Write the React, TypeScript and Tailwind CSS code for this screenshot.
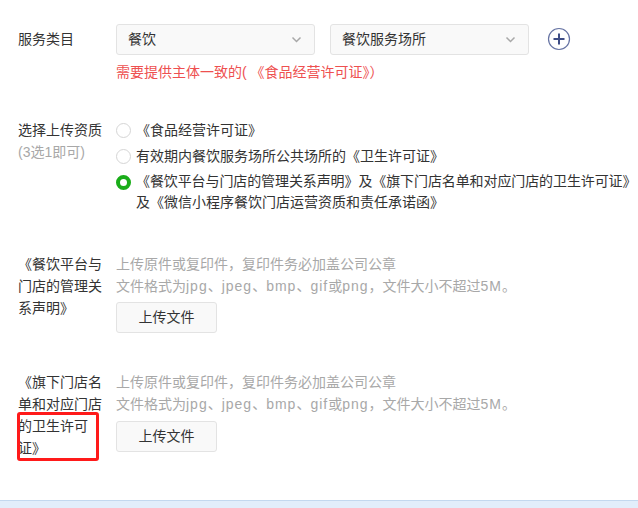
import React from 'react';

const font = { fontFamily: '"Liberation Sans", "Noto Sans CJK SC", sans-serif' };

function Chevron() {
  return (
    <svg width="11" height="7" viewBox="0 0 11 7" className="shrink-0">
      <path d="M1.5 1.5 L5.5 5.5 L9.5 1.5" fill="none" stroke="#a8a8a8" strokeWidth="1.5" />
    </svg>
  );
}

function Select({ value }: { value: string }) {
  return (
    <div className="w-[199px] h-[31px] flex items-center justify-between pl-[11px] pr-[12px] bg-[#f9f9f9] border border-[#e3e3e3] rounded-[3px] text-[14px] text-[#333]">
      <span>{value}</span>
      <Chevron />
    </div>
  );
}

function Radio({ checked }: { checked?: boolean }) {
  if (checked) {
    return <span className="w-[15px] h-[15px] rounded-full border-[4px] border-[#1aad19] bg-white shrink-0" />;
  }
  return <span className="w-[15px] h-[15px] rounded-full border border-[#d5d5d5] bg-white shrink-0" />;
}

function UploadButton() {
  return (
    <button className="w-[101px] h-[31px] bg-[#f9f9f9] border border-[#e3e3e3] rounded-[3px] text-[14px] text-[#333]">
      上传文件
    </button>
  );
}

function Hint() {
  return (
    <div className="text-[14px] leading-[22px] text-[#a8a8a8] whitespace-nowrap">
      <div>上传原件或复印件，复印件务必加盖公司公章</div>
      <div>
        文件格式为<span className="tracking-[1px]">jpg</span>、<span className="tracking-[1px]">jpeg</span>、
        <span className="tracking-[1px]">bmp</span>、<span className="tracking-[1px]">gif</span>或
        <span className="tracking-[1px]">png</span>，文件大小不超过<span className="tracking-[1px]">5M</span>。
      </div>
    </div>
  );
}

export default function App() {
  return (
    <div className="w-[638px] h-[508px] bg-white flex flex-col overflow-hidden relative" style={font}>
      <div className="pl-[18px] pt-[24px] text-[14px] text-[#333]">
        {/* 服务类目 */}
        <div className="flex items-start">
          <div className="w-[98px] leading-[31px] shrink-0">服务类目</div>
          <div className="flex flex-col">
            <div className="flex items-center gap-[15px]">
              <Select value="餐饮" />
              <Select value="餐饮服务场所" />
              <svg width="24" height="24" viewBox="0 0 24 24" className="ml-[3px] mt-[-1px]">
                <circle cx="12" cy="12" r="10.5" fill="none" stroke="#6673a3" strokeWidth="1.2" />
                <path d="M12 6.5 V17.5 M6.5 12 H17.5" stroke="#3e4d85" strokeWidth="2" />
              </svg>
            </div>
            <div className="mt-[8px] leading-[18px] text-[#ee5050]">需要提供主体一致的( 《食品经营许可证》）</div>
          </div>
        </div>

        {/* 选择上传资质 */}
        <div className="flex items-start mt-[38px]">
          <div className="w-[98px] shrink-0 leading-[22px]">
            <div>选择上传资质</div>
            <div className="text-[#a8a8a8]">(3选1即可)</div>
          </div>
          <div className="flex flex-col gap-[4px] leading-[22px]">
            <div className="flex items-center gap-[5px]">
              <Radio />
              <span>《食品经营许可证》</span>
            </div>
            <div className="flex items-center gap-[5px]">
              <Radio />
              <span>有效期内餐饮服务场所公共场所的《卫生许可证》</span>
            </div>
            <div className="flex items-start gap-[5px]">
              <div className="h-[22px] flex items-center">
                <Radio checked />
              </div>
              <div className="whitespace-nowrap leading-[21px]">
                <div className="tracking-[-0.1px]">《餐饮平台与门店的管理关系声明》及《旗下门店名单和对应门店的卫生许可证》</div>
                <div>及《微信小程序餐饮门店运营资质和责任承诺函》</div>
              </div>
            </div>
          </div>
        </div>

        {/* 管理关系声明 */}
        <div className="flex items-start mt-[40px]">
          <div className="w-[84px] mr-[14px] shrink-0 leading-[22px]">《餐饮平台与门店的管理关系声明》</div>
          <div className="flex flex-col items-start">
            <Hint />
            <div className="mt-[5px]">
              <UploadButton />
            </div>
          </div>
        </div>

        {/* 卫生许可证 */}
        <div className="flex items-start mt-[38px]">
          <div className="relative w-[84px] mr-[14px] shrink-0 leading-[22px]">
            《旗下门店名单和对应门店的卫生许可证》
            <span className="absolute left-[-1px] top-[41px] w-[82px] h-[49px] border-[3px] border-[#ff1a1a] rounded-[3px]" />
          </div>
          <div className="flex flex-col items-start">
            <Hint />
            <div className="mt-[6px]">
              <UploadButton />
            </div>
          </div>
        </div>
      </div>

      <div className="mt-auto h-[8px] bg-[#e2eefb] border-t border-[#c3d8ef]" />
    </div>
  );
}
